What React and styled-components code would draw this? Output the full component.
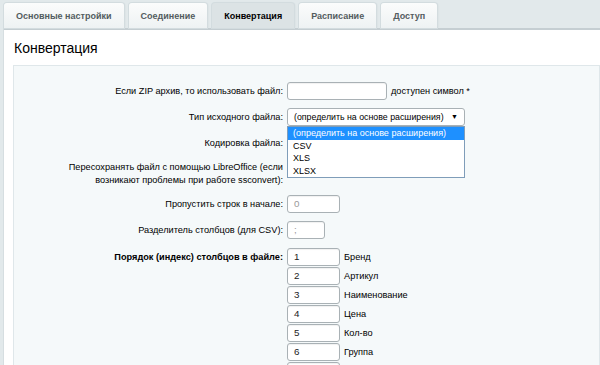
import React from "react";
import styled, { createGlobalStyle } from "styled-components";

const GlobalStyle = createGlobalStyle`
  body {
    margin: 0;
    background: #e2e9eb;
    font-family: "Liberation Sans", Arial, sans-serif;
  }
`;

const tabs = ["Основные настройки", "Соединение", "Конвертация", "Расписание", "Доступ"];

const columns = [
  ["1", "Бренд"],
  ["2", "Артикул"],
  ["3", "Наименование"],
  ["4", "Цена"],
  ["5", "Кол-во"],
  ["6", "Группа"],
  ["", ""],
];

const App = () => {
  return (
    <Wrapper>
      <GlobalStyle />
      <TabBar>
        {tabs.map((t) => (
          <Tab key={t} $active={t === "Конвертация"}>
            {t}
          </Tab>
        ))}
      </TabBar>

      <Panel>
        <Title>Конвертация</Title>
        <FormBox>
          <Row>
            <Label>Если ZIP архив, то использовать файл:</Label>
            <Field>
              <Input $w={100} />
              <Hint>доступен символ *</Hint>
            </Field>
          </Row>

          <Row>
            <Label>Тип исходного файла:</Label>
            <Field>
              <SelectBox>
                <span>(определить на основе расширения)</span>
                <Arrow>▼</Arrow>
                <Dropdown>
                  <Option $selected>(определить на основе расширения)</Option>
                  <Option>CSV</Option>
                  <Option>XLS</Option>
                  <Option>XLSX</Option>
                </Dropdown>
              </SelectBox>
            </Field>
          </Row>

          <Row $h={14} $top={2}>
            <Label>Кодировка файла:</Label>
            <Field />
          </Row>

          <Row $top={3}>
            <Label $lh={13}>
              Пересохранять файл с помощью LibreOffice (если
              <br />
              возникают проблемы при работе ssconvert):
            </Label>
            <Field />
          </Row>

          <Row>
            <Label>Пропустить строк в начале:</Label>
            <Field>
              <Input $w={53} $muted>0</Input>
            </Field>
          </Row>

          <Row>
            <Label>Разделитель столбцов (для CSV):</Label>
            <Field>
              <Input $w={38} $muted>;</Input>
            </Field>
          </Row>

          <Row $top={1} $start>
            <Label $bold>Порядок (индекс) столбцов в файле:</Label>
            <ColumnList>
              {columns.map(([n, name], i) => (
                <Field key={i}>
                  <Input $w={53}>{n}</Input>
                  <ColName>{name}</ColName>
                </Field>
              ))}
            </ColumnList>
          </Row>
        </FormBox>
      </Panel>
    </Wrapper>
  );
};

const Wrapper = styled.div`
  width: 600px;
  height: 365px;
  overflow: hidden;
`;

const TabBar = styled.div`
  display: flex;
  gap: 5px;
  padding: 3px 0 0 4px;
  height: 25px;
  box-sizing: content-box;
  align-items: flex-end;
`;

const Tab = styled.div`
  height: 25px;
  padding: 0 12px;
  display: flex;
  align-items: center;
  font-size: 9px;
  font-weight: bold;
  color: ${({ $active }) => ($active ? "#000" : "#535c5f")};
  background: ${({ $active }) =>
    $active ? "#dce3e5" : "linear-gradient(#fbfcfc, #eef2f3)"};
  border-radius: 3px 3px 0 0;
  box-shadow: 0 0 0 1px #d3dcdf, 1px 0 2px rgba(0, 0, 0, 0.08);
`;

const Panel = styled.div`
  margin-left: 3px;
  background: #fff;
  border-top: 2px solid #c5ced2;
  border-left: 1px solid #d6dee1;
  height: 340px;
`;

const Title = styled.h2`
  margin: 0;
  padding: 10px 0 0 10px;
  height: 25px;
  font-size: 14px;
  font-weight: normal;
  color: #000;
`;

const FormBox = styled.div`
  margin-left: 9px;
  border: 1px solid #dfe7ea;
  background: #f5f9fa;
  padding-top: 16px;
  height: 320px;
  display: flex;
  flex-direction: column;
  gap: 8px;
`;

const Row = styled.div`
  display: grid;
  grid-template-columns: 269px 1fr;
  column-gap: 4px;
  align-items: ${({ $start }) => ($start ? "start" : "center")};
  min-height: ${({ $h }) => ($h ? `${$h}px` : "18px")};
  margin-top: ${({ $top }) => ($top ? `${$top}px` : "0")};
`;

const Label = styled.div`
  text-align: right;
  font-size: 9.2px;
  line-height: ${({ $lh }) => ($lh ? `${$lh}px` : "14px")};
  color: #000;
  font-weight: ${({ $bold }) => ($bold ? "bold" : "normal")};
  padding-top: ${({ $bold }) => ($bold ? "2px" : "0")};
`;

const Field = styled.div`
  display: flex;
  align-items: center;
  gap: 4px;
  position: relative;
`;

const Input = styled.div`
  width: ${({ $w }) => $w}px;
  height: 18px;
  box-sizing: border-box;
  border: 1px solid #a9b1b5;
  border-radius: 3px;
  background: #fff;
  box-shadow: inset 0 1px 1px rgba(0, 0, 0, 0.06);
  font-size: 9.8px;
  line-height: 16px;
  padding-left: 6px;
  color: ${({ $muted }) => ($muted ? "#9a9a9a" : "#222")};
`;

const Hint = styled.span`
  font-size: 9.2px;
  color: #000;
`;

const SelectBox = styled.div`
  position: relative;
  width: 178px;
  height: 18px;
  box-sizing: border-box;
  border: 1px solid #a9b1b5;
  border-radius: 3px;
  background: #fff;
  font-size: 8.8px;
  display: flex;
  align-items: center;
  padding-left: 6px;
  color: #000;
  white-space: nowrap;
`;

const Arrow = styled.span`
  position: absolute;
  right: 6px;
  top: 4px;
  font-size: 7px;
`;

const Dropdown = styled.div`
  position: absolute;
  left: -1px;
  top: 17px;
  width: 178px;
  box-sizing: border-box;
  border: 1px solid #7f9db9;
  background: #fff;
  z-index: 2;
`;

const Option = styled.div`
  height: 12.5px;
  line-height: 12.5px;
  font-size: 9px;
  padding-left: 5px;
  color: ${({ $selected }) => ($selected ? "#fff" : "#000")};
  background: ${({ $selected }) => ($selected ? "#1e90ff" : "transparent")};
`;

const ColumnList = styled.div`
  display: flex;
  flex-direction: column;
  gap: 1px;
`;

const ColName = styled.span`
  font-size: 9.2px;
  color: #000;
`;

export default App;
